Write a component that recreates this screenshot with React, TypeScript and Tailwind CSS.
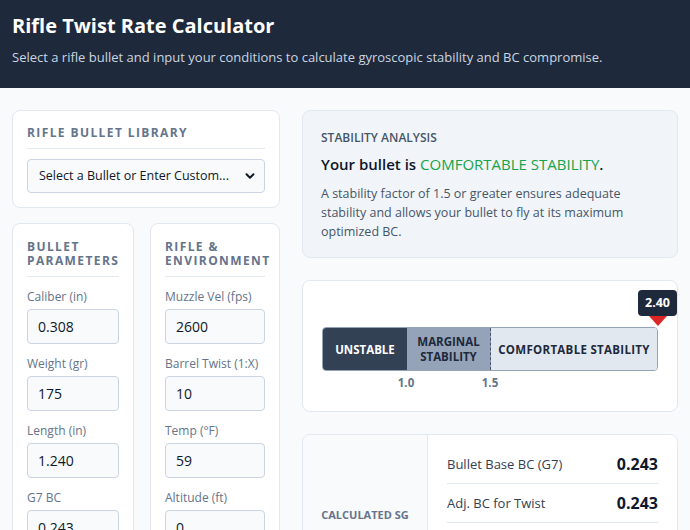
import React from "react";

const font = { fontFamily: '"Open Sans", "Noto Sans", sans-serif' };

function Field({ label, value }: { label: string; value: string }) {
  return (
    <div className="flex flex-col">
      <label className="text-[12px] leading-4 text-[#64748b] mb-1">{label}</label>
      <div className="h-[35px] rounded border border-[#cbd5e1] bg-[#f8fafc] px-[10px] flex items-center text-[14px] text-[#0f172a]">
        {value}
      </div>
    </div>
  );
}

function SectionTitle({ children }: { children: React.ReactNode }) {
  return (
    <div className="text-[12px] font-bold uppercase tracking-[1.4px] leading-[14px] text-[#64748b] pb-2 border-b border-[#e2e8f0]">
      {children}
    </div>
  );
}

function ResultRow({ label, value }: { label: string; value: string }) {
  return (
    <div className="flex items-center justify-between py-[9px] border-b border-[#e2e8f0]">
      <span className="text-[13px] leading-5 text-[#334155]">{label}</span>
      <span className="text-[16px] leading-5 font-bold text-[#0f172a]">{value}</span>
    </div>
  );
}

export default function App() {
  return (
    <div style={font} className="min-h-screen bg-[#f8fafc]">
      <header className="bg-[#1e293b] h-[88px] px-3 pt-[11px]">
        <h1 className="text-[20px] leading-[30px] font-bold text-white">Rifle Twist Rate Calculator</h1>
        <p className="mt-[6px] text-[13px] leading-5 text-[#cbd5e1]">
          Select a rifle bullet and input your conditions to calculate gyroscopic stability and BC compromise.
        </p>
      </header>

      <main className="grid grid-cols-[268px_1fr] gap-[22px] px-3 pt-[22px]">
        <div className="flex flex-col gap-[15px]">
          <section className="rounded-lg border border-[#e2e8f0] bg-white px-[14px] pt-[15px] pb-[14px]">
            <SectionTitle>Rifle Bullet Library</SectionTitle>
            <div className="mt-[10px] h-[34px] rounded border border-[#cbd5e1] bg-[#f8fafc] pl-[11px] pr-2 flex items-center justify-between">
              <span className="text-[12.5px] whitespace-nowrap text-[#0f172a]">Select a Bullet or Enter Custom...</span>
              <svg width="12" height="12" viewBox="0 0 12 12" fill="none">
                <path d="M2.5 4.2 L6 7.7 L9.5 4.2" stroke="#111827" strokeWidth="2" strokeLinecap="round" strokeLinejoin="round" />
              </svg>
            </div>
          </section>

          <div className="grid grid-cols-[122px_130px] gap-[16px]">
            <section className="rounded-lg border border-[#e2e8f0] bg-white px-[14px] pt-[16px]">
              <SectionTitle>Bullet Parameters</SectionTitle>
              <div className="mt-3 flex flex-col gap-3">
                <Field label="Caliber (in)" value="0.308" />
                <Field label="Weight (gr)" value="175" />
                <Field label="Length (in)" value="1.240" />
                <Field label="G7 BC" value="0.243" />
              </div>
            </section>
            <section className="rounded-lg border border-[#e2e8f0] bg-white px-[14px] pt-[16px]">
              <SectionTitle>Rifle &amp; Environment</SectionTitle>
              <div className="mt-3 flex flex-col gap-3">
                <Field label="Muzzle Vel (fps)" value="2600" />
                <Field label="Barrel Twist (1:X)" value="10" />
                <Field label="Temp (°F)" value="59" />
                <Field label="Altitude (ft)" value="0" />
              </div>
            </section>
          </div>
        </div>

        <div className="flex flex-col gap-[22px]">
          <section className="rounded-lg border border-[#e2e8f0] bg-[#f1f5f9] px-[18px] pt-[19px] pb-[16px]">
            <div className="text-[12px] leading-4 font-semibold uppercase text-[#475569]">Stability Analysis</div>
            <div className="mt-[8px] text-[15px] leading-5 font-semibold text-[#0f172a]">
              Your bullet is <span className="text-[#16a34a] font-medium">COMFORTABLE STABILITY</span>.
            </div>
            <p className="mt-[10px] text-[12.5px] leading-[19px] text-[#475569]">
              A stability factor of 1.5 or greater ensures adequate stability and allows your bullet to fly at its maximum
              optimized BC.
            </p>
          </section>

          <section className="rounded-lg border border-[#e2e8f0] bg-white px-[19px] pt-[46px] pb-[20px]">
            <div className="relative">
              <div className="flex h-[44px] rounded border border-[#94a3b8] overflow-hidden text-[11.5px] font-bold leading-[15px] text-center">
                <div className="w-[84px] bg-[#334155] text-white flex items-center justify-center">UNSTABLE</div>
                <div className="w-[84px] bg-[#94a3b8] text-[#1e293b] flex items-center justify-center border-r border-dashed border-[#475569]">
                  MARGINAL<br />STABILITY
                </div>
                <div className="flex-1 bg-[#e2e8f0] text-[#1e293b] flex items-center justify-center tracking-[0.3px]">
                  COMFORTABLE STABILITY
                </div>
              </div>
              <div className="absolute right-[-19px] top-[-37px] flex flex-col items-end">
                <div className="rounded bg-[#1e293b] text-white text-[12.5px] font-bold h-[26px] w-[39px] flex items-center justify-center">
                  2.40
                </div>
                <div className="mr-[10px] mt-0 w-0 h-0 border-l-[9px] border-r-[9px] border-t-[10px] border-l-transparent border-r-transparent border-t-[#dc2626]" />
              </div>
              <div className="relative h-[20px] text-[11.5px] font-bold text-[#64748b]">
                <span className="absolute left-[84px] top-[3px] -translate-x-1/2">1.0</span>
                <span className="absolute left-[168px] top-[3px] -translate-x-1/2">1.5</span>
              </div>
            </div>
          </section>

          <section className="rounded-lg border border-[#e2e8f0] bg-white grid grid-cols-[125px_1fr] overflow-hidden">
            <div className="bg-[#f8fafc] border-r border-[#e2e8f0] flex flex-col items-center justify-center">
              <div className="text-[11px] font-bold uppercase text-[#64748b]">Calculated SG</div>
              <div className="mt-1 text-[28px] font-bold text-[#16a34a]">2.40</div>
            </div>
            <div className="px-[19px] pt-[10px] pb-[40px]">
              <ResultRow label="Bullet Base BC (G7)" value="0.243" />
              <ResultRow label="Adj. BC for Twist" value="0.243" />
              <ResultRow label="BC Loss" value="0.0%" />
              <ResultRow label="Min. Twist for 1.5" value="1:12.4" />
            </div>
          </section>
        </div>
      </main>
    </div>
  );
}
